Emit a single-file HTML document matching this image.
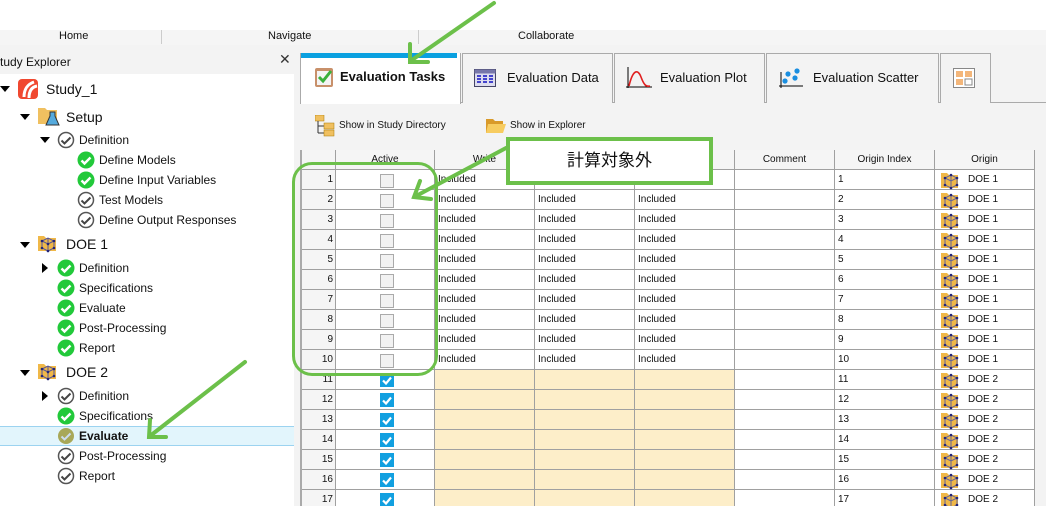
<!DOCTYPE html>
<html><head><meta charset="utf-8"><style>
*{margin:0;padding:0;box-sizing:border-box}
html,body{width:1046px;height:506px;overflow:hidden}
body{background:#fff;font-family:"Liberation Sans","Noto Sans CJK JP",sans-serif;position:relative;color:#111}
.a{position:absolute;white-space:nowrap}
.menu{top:30px;left:0;width:1046px;height:15px;background:#f5f5f5;font-size:11px}
.ph{top:45px;left:0;width:300px;height:29px;background:#f3f3f3;font-size:12px}
.tree{top:74px;left:0;width:294px;height:432px;background:#fff}
.strip{top:74px;left:294px;width:6px;height:432px;background:#f3f3f3}
.ti{position:absolute;font-size:12px;height:20px;line-height:20px;white-space:nowrap}
.tri{position:absolute;width:0;height:0}
.td{border-left:5px solid transparent;border-right:5px solid transparent;border-top:6px solid #000}
.tr{border-top:5px solid transparent;border-bottom:5px solid transparent;border-left:6px solid #000}
.right{top:45px;left:300px;width:746px;height:461px;background:#f3f3f3}
.tab{position:absolute;top:53px;height:50px;background:#f3f3f3;border:1px solid #aaa;border-bottom:none;font-size:13px;line-height:48px;white-space:nowrap}
.tbl{top:150px;left:301px;width:734px;height:356px;background:#fff}
.c{position:absolute;height:20px;border-right:1px solid #a0a0a0;border-bottom:1px solid #a0a0a0;font-size:10px;line-height:19px;padding-left:3px;white-space:nowrap;overflow:hidden}
.h{background:#f5f5f5;text-align:center;padding:0}
.cb{position:absolute;width:14px;height:14px;border:1px solid #aaa;background:#f2f2f2}
</style></head><body>
<div class="a menu"><span class="a" style="left:59px;top:0">Home</span><span class="a" style="left:161px;top:0;width:1px;height:14px;background:#ccc"></span><span class="a" style="left:268px;top:0">Navigate</span><span class="a" style="left:418px;top:0;width:1px;height:14px;background:#ccc"></span><span class="a" style="left:518px;top:0">Collaborate</span></div>
<div class="a ph"><span class="a" style="left:0;top:10px">tudy Explorer</span><span class="a" style="left:279px;top:6px;font-size:14px;color:#333">✕</span></div>
<div class="a tree">
<svg width="0" height="0" style="position:absolute"><defs>
<g id="gc"><circle cx="9" cy="9" r="8.5" fill="#22c93a"/><path d="M4.5 9.5l3 3 6-6" stroke="#fff" stroke-width="2.4" fill="none"/></g>
<g id="oc"><circle cx="9" cy="9" r="7.5" fill="#fff" stroke="#555" stroke-width="1.5"/><path d="M4.5 9.5l3 3 6-6" stroke="#444" stroke-width="2" fill="none"/></g>
<g id="doe"><path d="M1 3h6l2 2h10v13H1z" fill="#f0b848"/><path d="M5 8l6-3 6 3v7l-6 3-6-3z" fill="none" stroke="#559" stroke-width="1"/><path d="M11 5v13M5 8l6 3 6-3" stroke="#559" stroke-width="1" fill="none"/><circle cx="5" cy="8" r="1.3" fill="#22257a"/><circle cx="17" cy="8" r="1.3" fill="#22257a"/><circle cx="11" cy="18" r="1.3" fill="#22257a"/><circle cx="5" cy="15" r="1.3" fill="#22257a"/><circle cx="17" cy="15" r="1.3" fill="#22257a"/><circle cx="11" cy="11" r="1.3" fill="#22257a"/></g>
</defs></svg>
<div class="tri td" style="left:0;top:12px"></div>
<svg class="a" style="left:18px;top:5px" width="20" height="20"><rect width="20" height="20" rx="4" fill="#f04830"/><path d="M6 18C6 10 10 5 16 3M11 19C11 12 14 8 19 7" stroke="#fff" stroke-width="3" fill="none"/></svg>
<div class="ti" style="left:46px;top:5px;font-size:14px">Study_1</div>
<div class="tri td" style="left:20px;top:40px"></div>
<svg class="a" style="left:37px;top:32px" width="24" height="22"><path d="M1 2h7l2 2h10v14H1z" fill="#f0c060"/><path d="M13 6h5v4l4 9h-13l4-9z" fill="#5ad" stroke="#333" stroke-width="1"/></svg>
<div class="ti" style="left:66px;top:33px;font-size:14px">Setup</div>
<div class="tri td" style="left:40px;top:63px"></div>
<svg class="a" style="left:57px;top:57px" width="18" height="18"><use href="#oc"/></svg><div class="ti" style="left:79px;top:56px">Definition</div>
<svg class="a" style="left:77px;top:77px" width="18" height="18"><use href="#gc"/></svg><div class="ti" style="left:99px;top:76px">Define Models</div>
<svg class="a" style="left:77px;top:97px" width="18" height="18"><use href="#gc"/></svg><div class="ti" style="left:99px;top:96px">Define Input Variables</div>
<svg class="a" style="left:77px;top:117px" width="18" height="18"><use href="#oc"/></svg><div class="ti" style="left:99px;top:116px">Test Models</div>
<svg class="a" style="left:77px;top:137px" width="18" height="18"><use href="#oc"/></svg><div class="ti" style="left:99px;top:136px">Define Output Responses</div>
<div class="tri td" style="left:20px;top:168px"></div>
<svg class="a" style="left:37px;top:159px" width="22" height="22"><use href="#doe"/></svg><div class="ti" style="left:66px;top:160px;font-size:14px">DOE 1</div>
<div class="tri tr" style="left:42px;top:189px"></div>
<svg class="a" style="left:57px;top:185px" width="18" height="18"><use href="#gc"/></svg><div class="ti" style="left:79px;top:184px">Definition</div>
<svg class="a" style="left:57px;top:205px" width="18" height="18"><use href="#gc"/></svg><div class="ti" style="left:79px;top:204px">Specifications</div>
<svg class="a" style="left:57px;top:225px" width="18" height="18"><use href="#gc"/></svg><div class="ti" style="left:79px;top:224px">Evaluate</div>
<svg class="a" style="left:57px;top:245px" width="18" height="18"><use href="#gc"/></svg><div class="ti" style="left:79px;top:244px">Post-Processing</div>
<svg class="a" style="left:57px;top:265px" width="18" height="18"><use href="#gc"/></svg><div class="ti" style="left:79px;top:264px">Report</div>
<div class="tri td" style="left:20px;top:296px"></div>
<svg class="a" style="left:37px;top:287px" width="22" height="22"><use href="#doe"/></svg><div class="ti" style="left:66px;top:288px;font-size:14px">DOE 2</div>
<div class="tri tr" style="left:42px;top:317px"></div>
<svg class="a" style="left:57px;top:313px" width="18" height="18"><use href="#oc"/></svg><div class="ti" style="left:79px;top:312px">Definition</div>
<svg class="a" style="left:57px;top:333px" width="18" height="18"><use href="#gc"/></svg><div class="ti" style="left:79px;top:332px">Specifications</div>
<div class="a" style="left:0;top:352px;width:294px;height:20px;background:#e2f5fc;border-top:1px solid #9cd3f0;border-bottom:1px solid #9cd3f0"></div>
<svg class="a" style="left:57px;top:353px" width="18" height="18"><circle cx="9" cy="9" r="8" fill="#a8a858"/><path d="M4.5 9.5l3 3 6-6" stroke="#cde" stroke-width="2" fill="none"/></svg><div class="ti" style="left:79px;top:352px;font-weight:bold">Evaluate</div>
<svg class="a" style="left:57px;top:373px" width="18" height="18"><use href="#oc"/></svg><div class="ti" style="left:79px;top:372px">Post-Processing</div>
<svg class="a" style="left:57px;top:393px" width="18" height="18"><use href="#oc"/></svg><div class="ti" style="left:79px;top:392px">Report</div>
</div>
<div class="a strip"></div>
<div class="a right"></div>
<div class="a" style="left:300px;top:102px;width:746px;height:1px;background:#aaa"></div>
<div class="tab" style="left:300px;width:161px;background:#fff;border-top:none;height:51px"><div class="a" style="left:0;top:0;width:156px;height:5px;background:#0aa0e0"></div><svg class="a" style="left:13px;top:13px" width="20" height="22"><rect x="1" y="2" width="18" height="19" rx="2" fill="#c8906a"/><rect x="3" y="5" width="14" height="14" fill="#f4f4f4"/><path d="M5 11l4 4 8-10" stroke="#3bb03b" stroke-width="3" fill="none"/></svg><b style="margin-left:39px">Evaluation Tasks</b></div>
<div class="tab" style="left:462px;width:151px"><svg class="a" style="left:11px;top:15px" width="22" height="18"><rect x="0.5" y="0.5" width="21" height="17" fill="#dde" stroke="#446"/><rect x="0.5" y="0.5" width="21" height="4" fill="#77a"/><path d="M3 7h4M3 10h4M3 13h4M9 7h4M9 10h4M9 13h4M15 7h4M15 10h4M15 13h4" stroke="#44c" stroke-width="2"/></svg><span style="margin-left:44px">Evaluation Data</span></div>
<div class="tab" style="left:614px;width:151px"><svg class="a" style="left:11px;top:13px" width="26" height="22"><path d="M2 0v21M0 20h26" stroke="#000"/><path d="M3 19C7 2 12 2 15 10S20 20 24 19" stroke="#e02020" stroke-width="1.6" fill="none"/></svg><span style="margin-left:45px">Evaluation Plot</span></div>
<div class="tab" style="left:766px;width:173px"><svg class="a" style="left:12px;top:14px" width="24" height="20"><path d="M2 4v16M0 18h24" stroke="#000"/><circle cx="9" cy="6" r="2.6" fill="#1a8ee0"/><circle cx="18" cy="3" r="2.6" fill="#1a8ee0"/><circle cx="6" cy="13" r="2.6" fill="#1a8ee0"/><circle cx="16" cy="10" r="2.6" fill="#1a8ee0"/></svg><span style="margin-left:46px">Evaluation Scatter</span></div>
<div class="tab" style="left:940px;width:51px"><svg class="a" style="left:12px;top:14px" width="22" height="20"><rect x="0.5" y="0.5" width="21" height="19" fill="#fff" stroke="#888"/><rect x="3" y="3" width="7" height="6" fill="#f3b67a"/><rect x="12" y="3" width="7" height="6" fill="#f3b67a"/><rect x="3" y="11" width="7" height="6" fill="#f3b67a"/><rect x="12" y="11" width="7" height="6" fill="#fff" stroke="#888"/></svg></div>
<svg class="a" style="left:315px;top:115px" width="22" height="22"><rect x="0" y="0" width="9" height="6" fill="#f0c060" stroke="#a70" stroke-width=".5"/><path d="M3 6v12M3 11h6M3 18h6" stroke="#333"/><rect x="9" y="8" width="10" height="6" fill="#f0c060" stroke="#a70" stroke-width=".5"/><rect x="9" y="15" width="10" height="6" fill="#f0c060" stroke="#a70" stroke-width=".5"/></svg>
<div class="a" style="left:339px;top:120px;font-size:10px">Show in Study Directory</div>
<svg class="a" style="left:485px;top:117px" width="22" height="18"><path d="M1 2h7l2 2h8v12H1z" fill="#d99a2a"/><path d="M3 7h18l-3 9H1z" fill="#f7cc60"/></svg>
<div class="a" style="left:510px;top:120px;font-size:10px">Show in Explorer</div>
<div class="a tbl">
<div class="c h" style="left:0;top:0;width:35px"></div><div class="c h" style="left:35px;top:0;width:99px">Active</div><div class="c h" style="left:134px;top:0;width:100px">Write</div><div class="c h" style="left:234px;top:0;width:100px"></div><div class="c h" style="left:334px;top:0;width:100px"></div><div class="c h" style="left:434px;top:0;width:100px">Comment</div><div class="c h" style="left:534px;top:0;width:100px">Origin Index</div><div class="c h" style="left:634px;top:0;width:100px">Origin</div>
</div>
<div class="a" style="left:301px;top:170px;width:35px;height:336px;background:#f5f5f5"></div>
<div class="a" style="left:435px;top:370px;width:300px;height:136px;background:#fdeec9"></div>
<div class="a" style="left:301px;top:170px;width:734px;height:336px;background:
repeating-linear-gradient(to bottom,transparent 0 19px,#a0a0a0 19px 20px),
linear-gradient(to right,transparent 34px,#a0a0a0 34px 35px,transparent 35px 133px,#a0a0a0 133px 134px,transparent 134px 233px,#a0a0a0 233px 234px,transparent 234px 333px,#a0a0a0 333px 334px,transparent 334px 433px,#a0a0a0 433px 434px,transparent 434px 533px,#a0a0a0 533px 534px,transparent 534px 633px,#a0a0a0 633px 634px,transparent 634px 733px,#a0a0a0 733px 734px)"></div>
<div class="a" style="left:300px;top:150px;width:2px;height:356px;background:#aaa"></div>
<div class="a" style="left:301px;top:170px;font-size:10px;line-height:20px">
<div class="a" style="left:0;top:0;width:32px;text-align:right">1<br>2<br>3<br>4<br>5<br>6<br>7<br>8<br>9<br>10<br>11<br>12<br>13<br>14<br>15<br>16<br>17</div>
<div class="a" style="left:137px;top:0">Included<br>Included<br>Included<br>Included<br>Included<br>Included<br>Included<br>Included<br>Included<br>Included</div>
<div class="a" style="left:237px;top:20px">Included<br>Included<br>Included<br>Included<br>Included<br>Included<br>Included<br>Included<br>Included</div>
<div class="a" style="left:337px;top:20px">Included<br>Included<br>Included<br>Included<br>Included<br>Included<br>Included<br>Included<br>Included</div>
<div class="a" style="left:537px;top:0">1<br>2<br>3<br>4<br>5<br>6<br>7<br>8<br>9<br>10<br>11<br>12<br>13<br>14<br>15<br>16<br>17</div>
<div class="a" style="left:667px;top:0;width:60px">DOE 1<br>DOE 1<br>DOE 1<br>DOE 1<br>DOE 1<br>DOE 1<br>DOE 1<br>DOE 1<br>DOE 1<br>DOE 1<br>DOE 2<br>DOE 2<br>DOE 2<br>DOE 2<br>DOE 2<br>DOE 2<br>DOE 2</div>
</div>
<div class="a" style="left:380px;top:174px">
<div class="cb" style="top:0"></div><div class="cb" style="top:20px"></div><div class="cb" style="top:40px"></div><div class="cb" style="top:60px"></div><div class="cb" style="top:80px"></div><div class="cb" style="top:100px"></div><div class="cb" style="top:120px"></div><div class="cb" style="top:140px"></div><div class="cb" style="top:160px"></div><div class="cb" style="top:180px"></div>
</div>
<svg class="a" style="left:380px;top:373px" width="14" height="133"><defs><g id="ck"><rect width="14" height="14" fill="#12a0e0"/><path d="M3 7.5l3 3 5-6" stroke="#fff" stroke-width="2.2" fill="none"/></g></defs><use href="#ck" y="0"/><use href="#ck" y="20"/><use href="#ck" y="40"/><use href="#ck" y="60"/><use href="#ck" y="80"/><use href="#ck" y="100"/><use href="#ck" y="120"/></svg>
<svg class="a" style="left:940px;top:170px" width="26" height="336"><defs><g id="dd"><path d="M1 3h6l2 2h9v13H1z" fill="#f0b848"/><path d="M5 8l6-3 6 3v7l-6 3-6-3z" fill="none" stroke="#669" stroke-width="1"/><path d="M11 5v13M5 8l6 3 6-3" stroke="#669" fill="none"/><circle cx="5" cy="8" r="1.3" fill="#22257a"/><circle cx="17" cy="8" r="1.3" fill="#22257a"/><circle cx="11" cy="18" r="1.3" fill="#22257a"/><circle cx="5" cy="15" r="1.3" fill="#22257a"/><circle cx="17" cy="15" r="1.3" fill="#22257a"/><circle cx="11" cy="5" r="1.3" fill="#22257a"/></g></defs>
<use href="#dd" y="0"/><use href="#dd" y="20"/><use href="#dd" y="40"/><use href="#dd" y="60"/><use href="#dd" y="80"/><use href="#dd" y="100"/><use href="#dd" y="120"/><use href="#dd" y="140"/><use href="#dd" y="160"/><use href="#dd" y="180"/><use href="#dd" y="200"/><use href="#dd" y="220"/><use href="#dd" y="240"/><use href="#dd" y="260"/><use href="#dd" y="280"/><use href="#dd" y="300"/><use href="#dd" y="320"/></svg>
<div class="a" style="left:292px;top:162px;width:146px;height:214px;border:3px solid #6cc04a;border-radius:20px"></div>
<div class="a" style="left:506px;top:137px;width:207px;height:48px;border:4px solid #6cc04a;background:#fff;font-size:17px;text-align:center;line-height:40px">計算対象外</div>
<svg class="a" style="left:0;top:0" width="1046" height="506"><g stroke="#6cc04a" stroke-width="4" fill="none" stroke-linecap="round"><path d="M494 3L412 60M410 44v18h18"/><path d="M506 148L416 196M420 181l-6 16 17 2"/><path d="M245 362L150 436M150 420l-1 17h17"/></g></svg>
</body></html>
